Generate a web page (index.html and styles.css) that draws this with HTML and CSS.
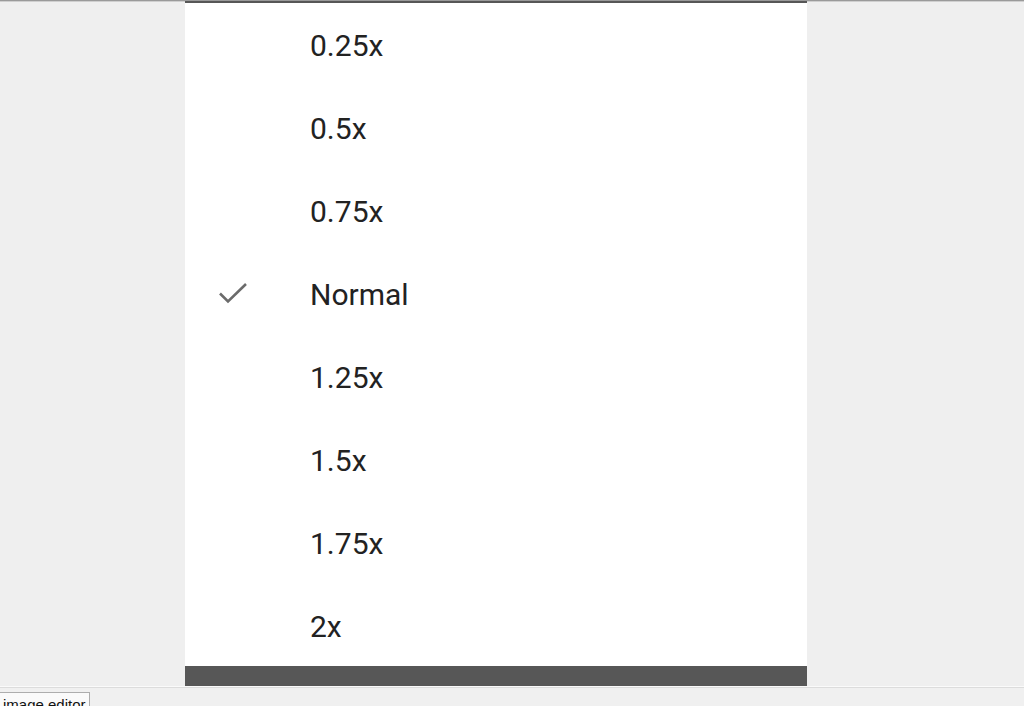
FILE: index.html
```html
<!DOCTYPE html>
<html>
<head>
<meta charset="utf-8">
<link rel="stylesheet" href="styles.css">
</head>
<body>
<div class="topline"></div>
<div class="stage">
  <div class="panel">
    <ul class="menu">
      <li class="item"><span class="check"></span><span class="label">0.25x</span></li>
      <li class="item"><span class="check"></span><span class="label">0.5x</span></li>
      <li class="item"><span class="check"></span><span class="label">0.75x</span></li>
      <li class="item selected"><span class="check"><svg width="30" height="22" viewBox="0 0 30 22"><path d="M2 11.5 L10 19.5 L28 2" fill="none" stroke="#6b6b6b" stroke-width="2.6"/></svg></span><span class="label">Normal</span></li>
      <li class="item"><span class="check"></span><span class="label">1.25x</span></li>
      <li class="item"><span class="check"></span><span class="label">1.5x</span></li>
      <li class="item"><span class="check"></span><span class="label">1.75x</span></li>
      <li class="item"><span class="check"></span><span class="label">2x</span></li>
    </ul>
    <div class="darkbar"></div>
  </div>
</div>
<div class="statusbar">
  <div class="tab">image editor</div>
</div>
</body>
</html>
```
FILE: styles.css
```css
html, body {
  margin: 0;
  padding: 0;
  width: 1024px;
  height: 706px;
  overflow: hidden;
  background: #efefef;
  font-family: Roboto, "Noto Sans", sans-serif;
}
.topline {
  height: 1px;
  background: #9a9a9a;
}
.stage {
  height: 685px;
  display: flex;
  padding-left: 185px;
  box-shadow: inset 0 1px 0 #cfcfcf;
}
.panel {
  width: 622px;
  background: #fff;
  border-top: 2px solid #575757;
  display: flex;
  flex-direction: column;
}
.menu {
  list-style: none;
  margin: 0;
  padding: 0;
  flex: 1;
  min-height: 0;
  overflow: hidden;
}
.item {
  height: 83px;
  display: flex;
  align-items: center;
  color: #222;
  font-size: 30px;
}
.item:first-child {
  height: 84px;
}
.check {
  width: 125px;
  display: flex;
  justify-content: flex-start;
  padding-left: 33px;
  box-sizing: border-box;
  align-items: center;
}
.check svg { display: block; margin-top: -4px; }
.darkbar {
  height: 20px;
  background: #575757;
  flex: none;
}
.statusbar {
  height: 20px;
  border-top: 1px solid #fafafa;
  box-shadow: inset 0 1px 0 #dcdcdc;
  background: #f0f0f0;
  padding-top: 5px;
  box-sizing: border-box;
}
.tab {
  width: 90px;
  height: 20px;
  box-sizing: border-box;
  border: 1px solid #adadad;
  border-left: none;
  border-bottom: none;
  background: #fafafa;
  font-family: "Liberation Sans", Arial, sans-serif;
  font-size: 15px;
  color: #111;
  padding: 4px 0 0 3px;
  line-height: 16px;
  white-space: nowrap;
}
```
